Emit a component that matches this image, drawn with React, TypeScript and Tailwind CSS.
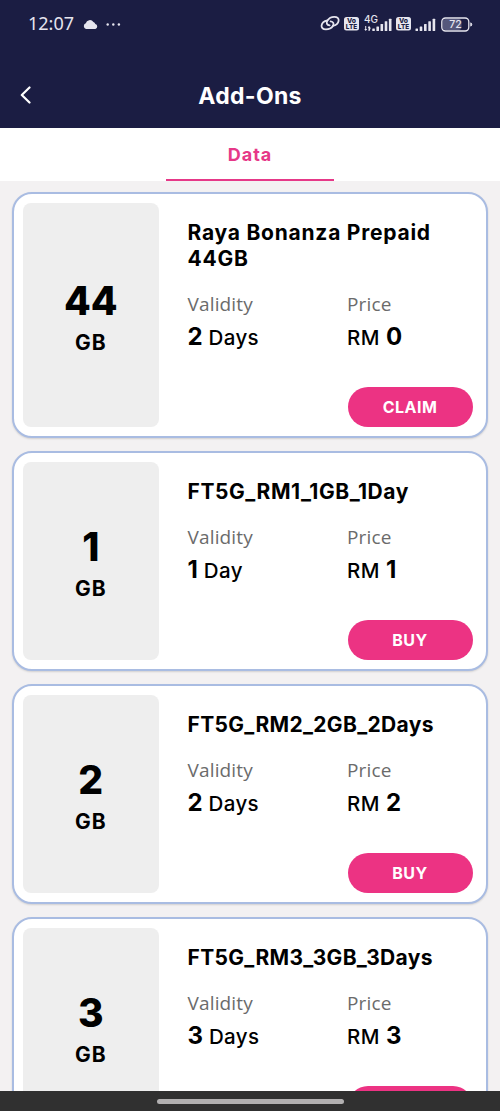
type Plan = {
  title: string;
  titleClass: string;
  amount: string;
  days: string;
  unit: string;
  price: string;
  action: string;
  height: string;
};

const plans: Plan[] = [
  { title: 'Raya Bonanza Prepaid 44GB', titleClass: 'tracking-[0.76px]', amount: '44', days: '2', unit: 'Days', price: '0', action: 'CLAIM', height: 'h-[246px]' },
  { title: 'FT5G_RM1_1GB_1Day', titleClass: 'tracking-[0.56px]', amount: '1', days: '1', unit: 'Day', price: '1', action: 'BUY', height: 'h-[220px]' },
  { title: 'FT5G_RM2_2GB_2Days', titleClass: 'tracking-[0.33px]', amount: '2', days: '2', unit: 'Days', price: '2', action: 'BUY', height: 'h-[220px]' },
  { title: 'FT5G_RM3_3GB_3Days', titleClass: 'tracking-[0.33px]', amount: '3', days: '3', unit: 'Days', price: '3', action: 'BUY', height: 'h-[220px]' },
];

function VolteBadge() {
  return (
    <svg className="h-[14px] w-[15px] shrink-0" viewBox="0 0 15 14">
      <rect width="15" height="13.4" rx="2.5" fill="#e6e5ee" />
      <text x="7.5" y="6.1" textAnchor="middle" fontSize="6.8" fontWeight="800" fill="#1b1d43" fontFamily="Inter, sans-serif">Vo</text>
      <text x="7.5" y="12" textAnchor="middle" fontSize="6.4" fontWeight="800" fill="#1b1d43" fontFamily="Inter, sans-serif">LTE</text>
    </svg>
  );
}

function StatusBar() {
  return (
    <div className="flex h-[48px] items-center pl-[28px] pr-[27px] text-[#e6e5ee]">
      <span className="relative -top-px font-['Noto_Sans',sans-serif] text-[18px] leading-[24px]">12:07</span>
      <svg className="ml-[9px] h-[9px] w-[15px]" viewBox="0 0 15 9" fill="currentColor">
        <path d="M3 9a3 3 0 0 1-.2-5.7A4.2 4.2 0 0 1 10.4 2 2.8 2.8 0 0 1 12.3 4 2.6 2.6 0 0 1 12.4 9Z" />
      </svg>
      <svg className="ml-[8px] h-[3px] w-[15px]" viewBox="0 0 15 3" fill="currentColor">
        <circle cx="1.7" cy="1.5" r="1.2" />
        <circle cx="7.3" cy="1.5" r="1.2" />
        <circle cx="12.9" cy="1.5" r="1.2" />
      </svg>
      <div className="ml-auto flex items-center">
        <svg className="relative -top-px h-[16px] w-[20px]" viewBox="0 0 20 16" fill="none" stroke="currentColor" strokeWidth="1.8" strokeLinecap="round">
          <path d="M9.6 10.3C6.9 10 5.9 8 7.3 5.7 8.8 3.3 11.6 1.8 14.3 1.8c3 0 4.7 1.7 4.3 4-.4 2.6-2.9 4.5-5.8 5.1" />
          <path d="M10.6 6.4c2.7.3 3.7 2.3 2.3 4.6-1.5 2.4-4.3 3.4-7 3.4-3 0-4.7-1.7-4.3-4 .4-2.6 2.9-4.5 5.8-5.1" />
        </svg>
        <span className="ml-[4px] flex"><VolteBadge /></span>
        <svg className="ml-[5px] h-[18px] w-[28px] overflow-visible" viewBox="0 -2 28 18" fill="currentColor">
          <text x="0" y="6.4" fontSize="10" fontWeight="500" fontFamily="Inter, sans-serif">4G</text>
          <path d="M1.2 9h1v3H3.3L1.7 14 .3 12h.9ZM4.5 14V11H3.8L5 8.8 6.7 11 5.5 14Z" />
          <rect x="8.3" y="11.5" width="2.5" height="2.5" rx=".5" />
          <rect x="12.4" y="9.5" width="2.6" height="4.5" rx=".5" />
          <rect x="16.5" y="7" width="2.6" height="7" rx=".5" />
          <rect x="20.7" y="4.3" width="2.6" height="9.7" rx=".5" />
          <rect x="24.9" y="1.7" width="2.6" height="12.3" rx=".5" />
        </svg>
        <span className="ml-[4px] flex"><VolteBadge /></span>
        <svg className="ml-[4px] h-[18px] w-[21px]" viewBox="0 -2 21 18" fill="currentColor">
          <rect x=".5" y="11.5" width="2.5" height="2.5" rx=".5" />
          <rect x="4.7" y="9.5" width="2.6" height="4.5" rx=".5" />
          <rect x="9" y="7" width="2.6" height="7" rx=".5" />
          <rect x="13.3" y="4.3" width="2.6" height="9.7" rx=".5" />
          <rect x="17.6" y="1.7" width="2.6" height="12.3" rx=".5" />
        </svg>
        <svg className="ml-[5px] h-[15px] w-[32px]" viewBox="0 0 32 15">
          <rect x="1.5" y="1.9" width="19" height="11.2" rx="3" fill="#55577b" />
          <rect x=".8" y="1" width="27" height="13" rx="3.7" fill="none" stroke="currentColor" strokeWidth="1.3" />
          <path d="M29.8 5.8a2 2 0 0 1 0 3.4Z" fill="currentColor" stroke="currentColor" />
          <text x="14.4" y="11.3" textAnchor="middle" fontSize="10.5" fontWeight="500" fill="currentColor" fontFamily="Inter, sans-serif">72</text>
        </svg>
      </div>
    </div>
  );
}

function PlanCard({ plan }: { plan: Plan }) {
  return (
    <section className={`flex shrink-0 rounded-[20px] border-2 border-[#a9bce2] bg-white py-[9px] pl-[9px] pr-[13.5px] shadow-[0_1px_2px_rgba(0,0,0,0.14)] ${plan.height}`}>
      <div className="flex w-[135.5px] shrink-0 flex-col items-center justify-center rounded-[8px] bg-[#eeeeee] pt-[5px]">
        <div className="h-[46px] text-[39px] font-extrabold leading-[46px]">{plan.amount}</div>
        <div className="mt-[4px] h-[30px] text-[21px] font-bold leading-[30px] tracking-[0.8px]">GB</div>
      </div>
      <div className="ml-[29px] flex min-w-0 flex-1 flex-col pt-[17px]">
        <h2 className={`w-[262px] text-[21px] font-bold leading-[26px] ${plan.titleClass}`}>{plan.title}</h2>
        <div className="mt-[19px] grid grid-cols-[159.5px_1fr]">
          <span className="font-['Open_Sans',sans-serif] text-[19px] leading-[26px] tracking-[0.15px] text-[#6b6b6b]">Validity</span>
          <span className="font-['Open_Sans',sans-serif] text-[19px] leading-[26px] tracking-[0.15px] text-[#6b6b6b]">Price</span>
          <p className="mt-[4px] text-[20.5px] font-medium leading-[32px] tracking-[0.4px]"><b className="text-[24px] font-bold tracking-normal">{plan.days}</b> {plan.unit}</p>
          <p className="mt-[4px] text-[20.5px] font-medium leading-[32px] tracking-[0.5px]">RM <b className="text-[24px] font-bold">{plan.price}</b></p>
        </div>
        <button className="mt-auto h-[40px] w-[125px] shrink-0 self-end rounded-full bg-[#ec3383] text-[16px] font-bold tracking-[0.5px] text-white">{plan.action}</button>
      </div>
    </section>
  );
}

export default function App() {
  return (
    <div className="flex h-[1111px] w-[500px] flex-col overflow-hidden bg-[#f3f1f2] font-['Inter',sans-serif] text-black">
      <header className="h-[128px] shrink-0 bg-[#1b1d43]">
        <StatusBar />
        <div className="grid h-[80px] grid-cols-[60px_1fr_60px] items-center pt-[15px]">
          <svg className="relative -top-px ml-[20px] h-[18px] w-[12px]" viewBox="0 0 12 18" fill="none" stroke="white" strokeWidth="2.2" strokeLinecap="round" strokeLinejoin="round">
            <path d="M9.5 1.5 1.8 9l7.7 7.5" />
          </svg>
          <h1 className="text-center text-[23px] font-bold leading-[30px] tracking-[0.3px] text-white">Add-Ons</h1>
        </div>
      </header>
      <nav className="flex h-[53px] shrink-0 justify-center bg-white">
        <button className="w-[168px] border-b-2 border-[#e63888] pt-[2px] text-[18px] font-bold tracking-[1px] text-[#e63888]">Data</button>
      </nav>
      <main className="flex min-h-0 flex-1 flex-col gap-[13px] overflow-hidden px-[12px] pt-[11px]">
        {plans.map((plan) => <PlanCard key={plan.title} plan={plan} />)}
      </main>
      <footer className="flex h-[20px] shrink-0 justify-center bg-[#303030] pt-[8px]">
        <div className="h-[5px] w-[187px] rounded-full bg-[#b2b0b1]" />
      </footer>
    </div>
  );
}
